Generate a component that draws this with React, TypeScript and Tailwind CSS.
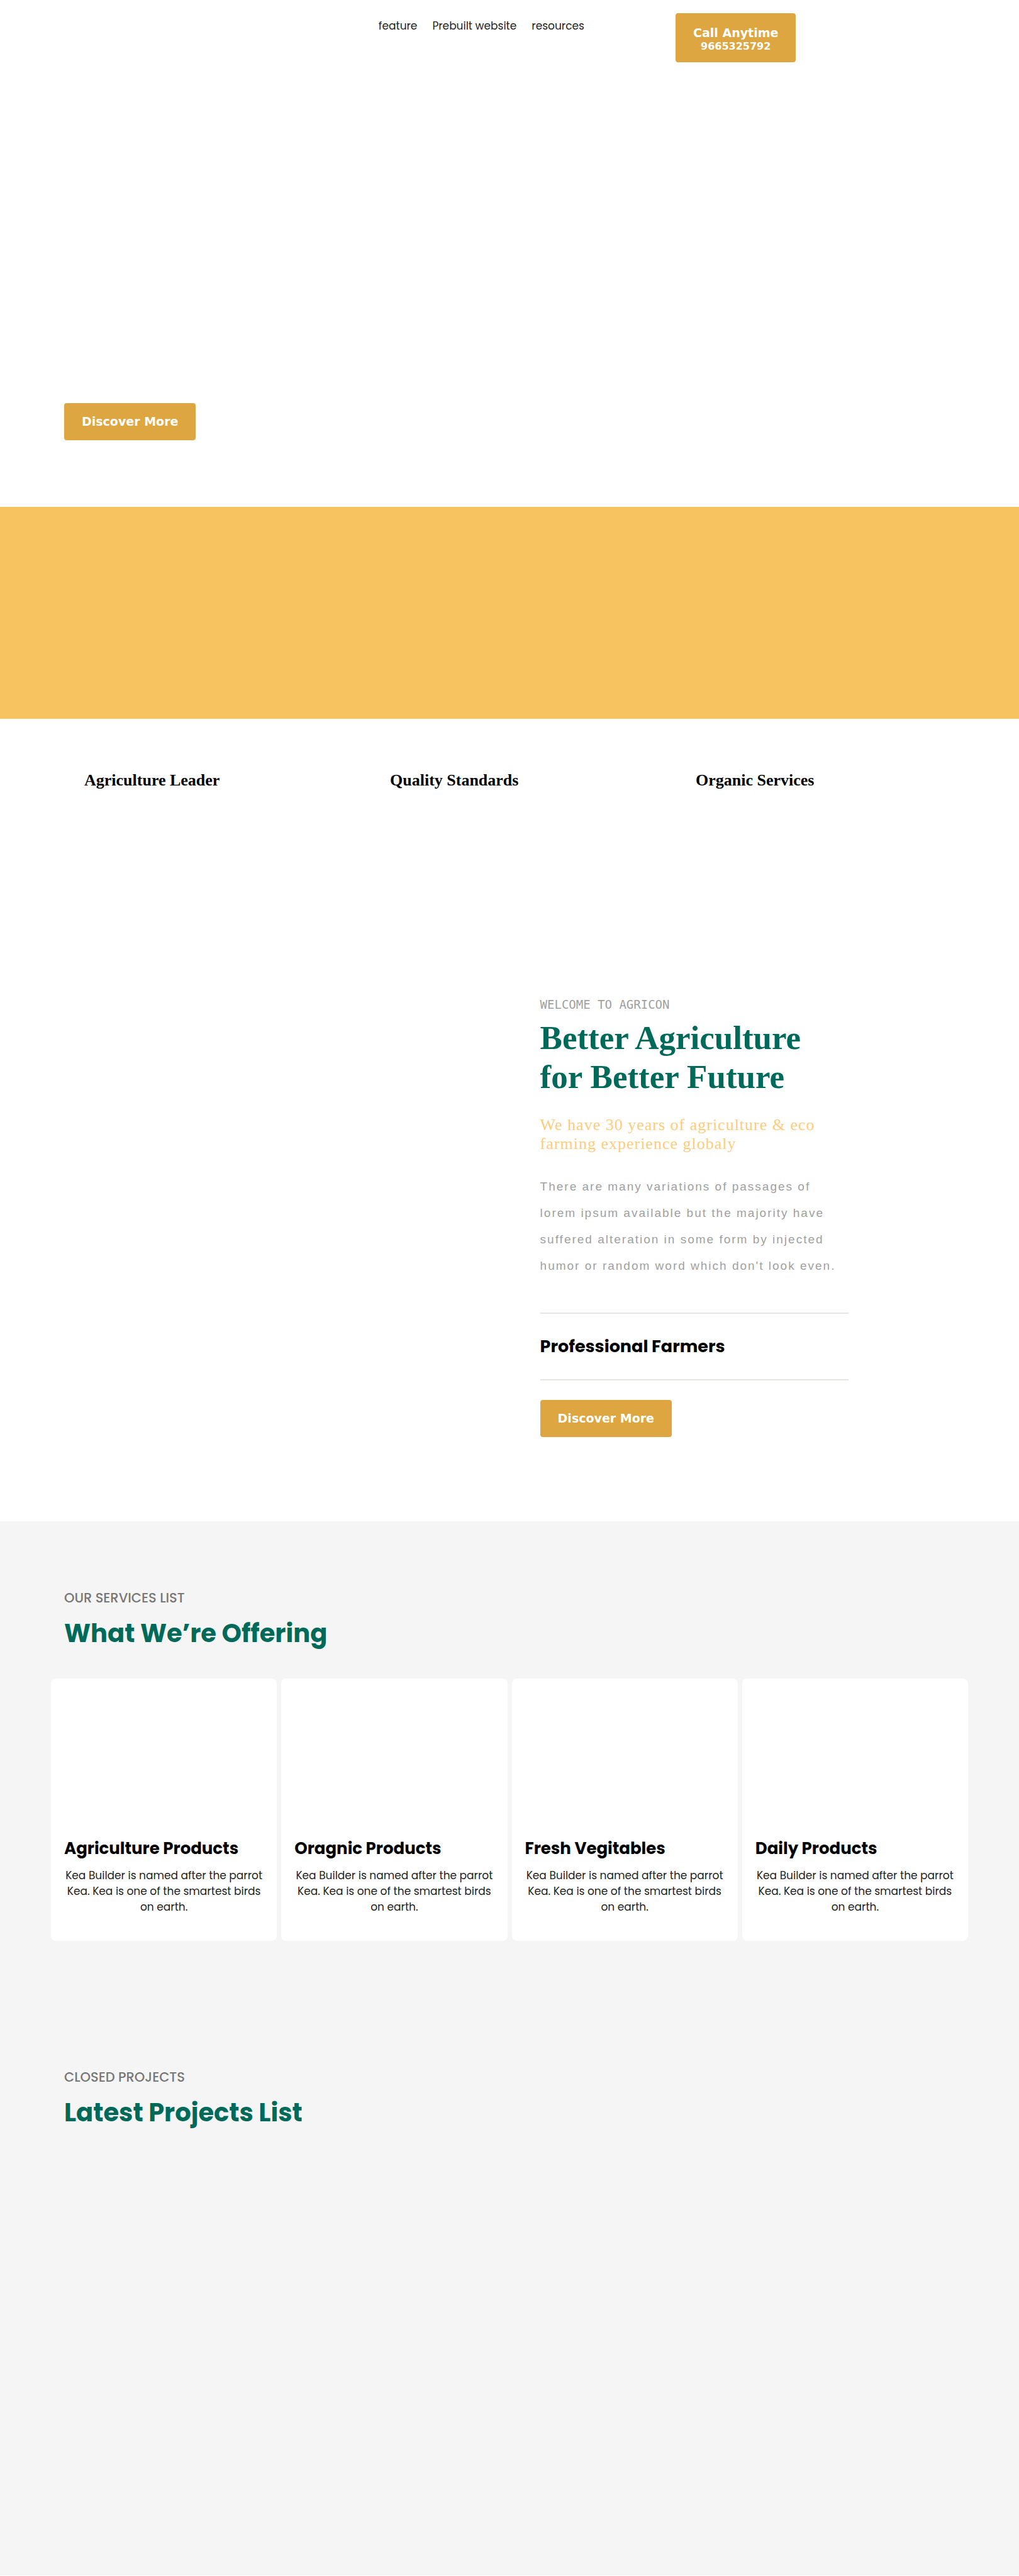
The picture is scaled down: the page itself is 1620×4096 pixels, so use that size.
import React from "react";

const navLinks = ["feature", "Prebuilt website", "resources"];
const features = ["Agriculture Leader", "Quality Standards", "Organic Services"];
const products = ["Agriculture Products", "Oragnic Products", "Fresh Vegitables", "Daily Products"];

function DiscoverButton() {
  return (
    <button
      type="button"
      className="h-[59px] rounded bg-[#dda640] px-7 font-[Verdana,'DejaVu_Sans',sans-serif] text-[19px] font-bold whitespace-nowrap text-white"
    >
      Discover More
    </button>
  );
}

function SectionTitle({ label, title }: { label: string; title: string }) {
  return (
    <div className="px-[21px]">
      <p className="text-[21px] leading-7 font-medium text-[#777777]">{label}</p>
      <h2 className="mt-3.5 text-[40px] leading-[56px] font-bold text-[#006a5a]">{title}</h2>
    </div>
  );
}

export default function App() {
  return (
    <div className="bg-white font-['Poppins','Inter',sans-serif] text-black">
      <header className="grid grid-cols-[37.15%_29.15%_1fr] items-start pt-[21px]">
        <nav className="col-start-2 flex gap-6 pt-2 text-[17px] leading-6 whitespace-nowrap text-[#222222]">
          {navLinks.map((link) => (
            <a key={link} href="#">
              {link}
            </a>
          ))}
        </nav>
        <div>
          <button
            type="button"
            className="flex h-[78px] flex-col items-center justify-center rounded bg-[#dda640] px-7 pt-1 font-[Verdana,'DejaVu_Sans',sans-serif] font-bold whitespace-nowrap text-white"
          >
            <span className="text-[19px] leading-6">Call Anytime</span>
            <span className="text-[16px] leading-5">9665325792</span>
          </button>
        </div>
      </header>

      <section className="px-[102px] pt-[542px] pb-[106px]">
        <DiscoverButton />
      </section>

      <section className="h-[337px] bg-[#f7c35f]" />

      <section className="grid grid-cols-3 px-[81px] pt-[82px]">
        {features.map((name) => (
          <h3
            key={name}
            className="pl-[53px] font-['Liberation_Serif',serif] text-[26px] leading-8 font-bold whitespace-nowrap"
          >
            {name}
          </h3>
        ))}
      </section>

      <section className="grid grid-cols-[53%_1fr] pt-[326px] pb-[134px]">
        <div className="col-start-2 w-[490px]">
          <p className="font-['DejaVu_Sans_Mono',monospace] text-[19px] leading-7 text-[#a0a0a0]">
            WELCOME TO AGRICON
          </p>
          <h1 className="mt-2 font-['Liberation_Serif',serif] text-[53px] leading-[62px] font-bold text-[#006a5a]">
            Better Agriculture
            <br />
            for Better Future
          </h1>
          <p className="mt-[31px] font-['Liberation_Serif',serif] text-[26px] leading-[30px] tracking-[1px] text-[#ffcb7c]">
            We have 30 years of agriculture &amp; eco farming experience globaly
          </p>
          <p className="mt-8 font-['Liberation_Sans',sans-serif] text-[19px] leading-[42px] tracking-[2px] text-[#a0a0a0]">
            There are many variations of passages of lorem ipsum available but the majority have
            suffered alteration in some form by injected humor or random word which don't look even.
          </p>
          <div className="mt-[53px] flex h-[108px] items-center border-y-2 border-[#e6e6e0]">
            <h2 className="text-[27px] leading-9 font-bold">Professional Farmers</h2>
          </div>
          <div className="mt-[31px] flex">
            <DiscoverButton />
          </div>
        </div>
      </section>

      <main className="bg-[#f5f5f5] px-[81px] pt-[108px] pb-[708px]">
        <section>
          <SectionTitle label="OUR SERVICES LIST" title="What We’re Offering" />
          <div className="mt-11 grid grid-cols-4 gap-[7px]">
            {products.map((name) => (
              <article key={name} className="rounded-lg bg-white px-[21px] pt-[252px] pb-[41px]">
                <h3 className="text-[26px] leading-9 font-bold whitespace-nowrap">{name}</h3>
                <p className="mt-[13px] text-center text-[17px] leading-[25px] text-[#222222]">
                  Kea Builder is named after the parrot Kea. Kea is one of the smartest birds on
                  earth.
                </p>
              </article>
            ))}
          </div>
        </section>
        <section className="pt-[203px]">
          <SectionTitle label="CLOSED PROJECTS" title="Latest Projects List" />
        </section>
      </main>
    </div>
  );
}
